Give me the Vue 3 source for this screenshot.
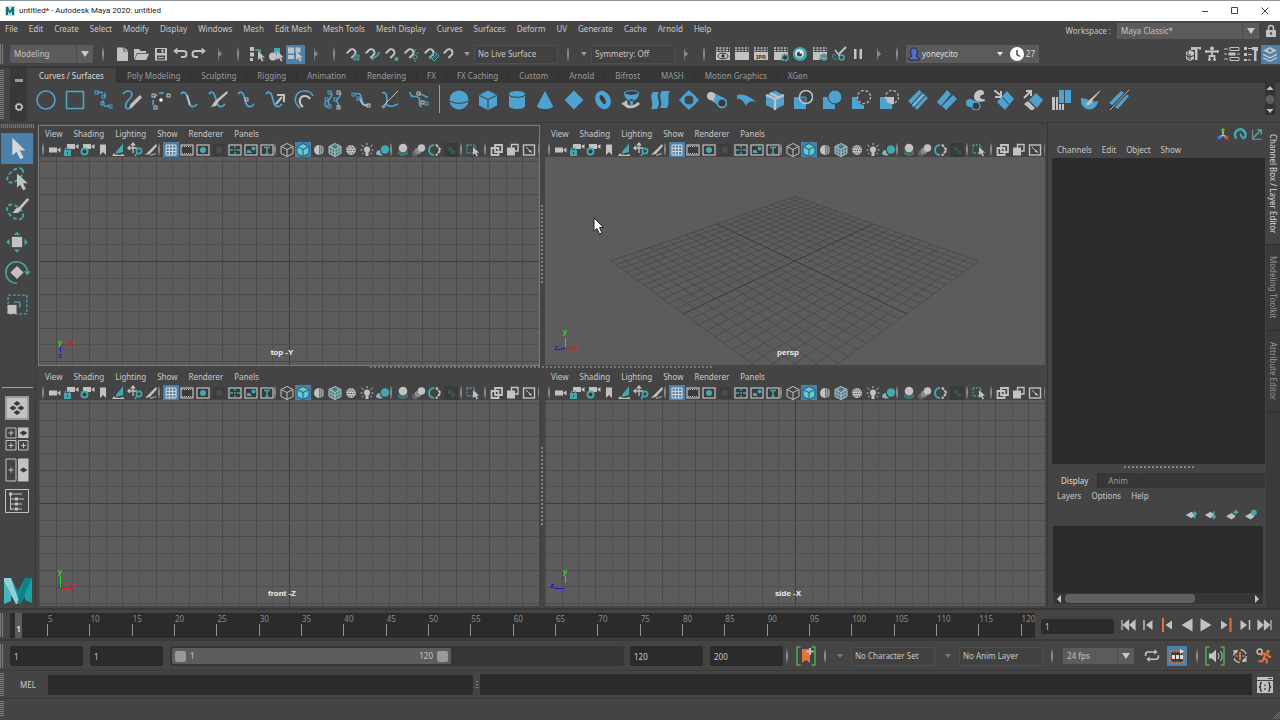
<script setup>
const G = '#c2c2c2'
const T = '#43a8b0'
const B = '#4ea2d0'
const O = '#e0733f'
const D = '#3a3a3a'

const menus = ['File', 'Edit', 'Create', 'Select', 'Modify', 'Display', 'Windows', 'Mesh', 'Edit Mesh', 'Mesh Tools', 'Mesh Display', 'Curves', 'Surfaces', 'Deform', 'UV', 'Generate', 'Cache', 'Arnold', 'Help']
const shelfTabs = ['Curves / Surfaces', 'Poly Modeling', 'Sculpting', 'Rigging', 'Animation', 'Rendering', 'FX', 'FX Caching', 'Custom', 'Arnold', 'Bifrost', 'MASH', 'Motion Graphics', 'XGen']
const panelMenus = ['View', 'Shading', 'Lighting', 'Show', 'Renderer', 'Panels']

const pointer = (x, y, s = 1) => `<path transform="translate(${x} ${y}) scale(${s})" d="M0 0v9l2.200-2 1.600 3.600 1.700-.800-1.600-3.400h3z" fill="${G}"/>`
const box = (x, y, c = G) => `<rect x="${x}" y="${y}" width="3" height="3" fill="none" stroke="${c}"/>`
const wave = (c = B) => `<path d="M1 4c2-3 5-2 6 2l2 7c1 4 5 5 8 1" fill="none" stroke="${c}" stroke-width="1.800"/>`
const clapper = `<path d="M1 6h14v8H1z" fill="${G}"/><path d="M1 4.500h14M1 2h14" stroke="${G}" stroke-width="1.500" stroke-dasharray="2 1.300"/>`
const magnet = `<path transform="rotate(45 7 7)" d="M3.500 11V6.500a3.300 3.300 0 0 1 6.600 0V11" fill="none" stroke="${G}" stroke-width="2"/>`
const camera = (x, y) => `<path d="M${x} ${y}h8v5h-8zM${x + 8.5} ${y + 2}l3-2v5l-3-2z" fill="${G}"/>`
const frame = inner => `<rect x="2" y="3" width="12" height="10" fill="${D}" stroke="${G}" stroke-width="1.200"/>${inner}`

const fileIcons = {
  'New scene': `<path d="M3 1.500h6.500v4H14V15H3z" fill="${G}"/><path d="M10.500 1.500L14 5h-3.500z" fill="${G}"/>`,
  'Open scene': `<path d="M1 3h5l1.500 2H13v2H4l-2 5-1 1z" fill="${G}"/><path d="M4.500 7.800H16L13.200 14H1.500z" fill="${G}"/>`,
  'Save scene': `<path fill-rule="evenodd" d="M2 2h12v12.500H2zM4 3v4h8V3zM4 9.500v4h8v-4z" fill="${G}"/><path d="M8.500 3.500h2v3h-2zM5 11h6v1H5z" fill="${G}"/>`,
  'Undo': `<path d="M5.500 1.500v7L1 5z" fill="${G}"/><path d="M4 5h7.500a3 3 0 0 1 0 6H9" fill="none" stroke="${G}" stroke-width="2"/>`,
  'Redo': `<path d="M10.500 1.500v7L15 5z" fill="${G}"/><path d="M12 5H4.500a3 3 0 0 0 0 6H7" fill="none" stroke="${G}" stroke-width="2"/>`
}
const maskIcons = {
  'Hierarchy mode': `<path d="M1 1h4v4H1zM1 6.500h4v4H1zM1 12h3v3H1z" fill="${G}"/><path d="M6 4h5v4" stroke="${T}" fill="none" stroke-width="1.600"/>${pointer(9, 5)}`,
  'Object mode': `<path d="M6 2h6v6H6z" fill="${T}"/><circle cx="5" cy="10.500" r="4" fill="${G}"/>${pointer(9, 5)}`,
  'Component mode': `<path d="M1 1.500h6v6H1zM8.500 1.500h5v5h-5zM1 9h6v4H1z" fill="${G}"/>${pointer(9, 5)}`
}
const snapIcons = {
  'Snap to grids': magnet + `<path d="M8 10h7M8 13h7M10 8v7M13 8v7" stroke="${T}"/>`,
  'Snap to curves': magnet + `<path d="M8 14c1-5 6-1 7-8" stroke="${T}" fill="none" stroke-width="1.600"/>`,
  'Snap to points': magnet + `<circle cx="12.500" cy="13" r="2" fill="${T}"/>`,
  'Snap to projected center': magnet + `<circle cx="12" cy="11" r="2" fill="none" stroke="${T}"/><path d="M12 3v3M12 14v2M15 6l-1 2" stroke="${T}"/>`,
  'Snap to view planes': magnet + `<path d="M12 6l4 4-5 5-4-4z" fill="none" stroke="${T}"/><path d="M9.500 8.500l4 4M14 8l-5 5" stroke="${T}"/>`,
  'Make live': magnet
}
const renderIcons = {
  'Render view': clapper + `<ellipse cx="8" cy="10" rx="5" ry="2.800" fill="none" stroke="${D}"/><circle cx="8" cy="10" r="1.800" fill="${D}"/>`,
  'Render frame': clapper,
  'IPR render': clapper + `<text x="8" y="12.500" text-anchor="middle" font-size="6" font-weight="bold" fill="${D}">IPR</text>`,
  'Render settings': clapper + `<circle cx="12" cy="11.500" r="3" fill="${D}" stroke="${T}" stroke-width="2" stroke-dasharray="2 .600"/>`,
  'Hypershade': `<circle cx="8" cy="8" r="7" fill="${T}"/><circle cx="7.500" cy="7.500" r="4.300" fill="#e6e6e6"/><circle cx="7.500" cy="8" r="2.600" fill="#30464a"/><circle cx="8.800" cy="6.500" r="1.200" fill="#fff"/>`,
  'Render setup': clapper + `<path d="M12 8l4 2-4 2-4-2zM8 12l4 2 4-2v1.500l-4 2-4-2z" fill="${T}" stroke="${D}" stroke-width=".500"/>`,
  'Light editor': `<path d="M15 1L8 8" stroke="${G}" stroke-width="2"/><circle cx="10.500" cy="11.500" r="2.500" fill="none" stroke="${T}" stroke-width="1.600"/><path d="M4 4l3 4 2 2" stroke="${G}" stroke-width="1.500" fill="none"/><path d="M1 9h4M2 13h4M1 11h2" stroke="${T}" stroke-dasharray="1.500 1"/>`,
  'Pause': `<path d="M4 3h2.500v10H4zM9.500 3H12v10H9.500z" fill="${G}"/>`
}
const sideIcons = {
  'Modeling toolkit': `<path d="M1 6l4-2 4 2v7l-4 2-4-2z" fill="${G}"/><path d="M1 9.500l4 1.500 4-1.500M5 8v6M3 5v8" stroke="${D}" fill="none"/><path d="M6 1h10v2.500h-2V2.800h-1.500V14H10V4H6z" fill="${G}"/>`,
  'Character controls': `<circle cx="8" cy="2.500" r="2" fill="${G}"/><path d="M1 5.500h14M8 5v5M5.500 15v-5h5v5" stroke="${G}" stroke-width="1.800" fill="none"/><path d="M2.500 4v3M13.500 4v3M4 13.500h3M9 13.500h3" stroke="${G}"/>`,
  'Channel box': `<path d="M0 3h4M0 8h3M0 13h4M13 8h3" stroke="${G}"/><path d="M6 1.500h9v3H6zM6 11.500h9v3H6z" fill="none" stroke="${G}"/><path d="M4.500 6.500h7v3h-7z" fill="${G}"/>`,
  'Attribute editor': `<path d="M1 1h3v3H1zM1 7h3v3H1zM1 13h3v2H1z" fill="${G}"/><path d="M5 2.500h4M5 8.500h4M5 14h3" stroke="${G}"/><path d="M9 1h6v4h-1.500v10H11V4H9z" fill="${G}"/>`,
  'Layer editor': `<path d="M8 1l7 3.500L8 8 1 4.500z" fill="${G}"/><path d="M1 7.500L8 11l7-3.500v1.800l-7 3.500-7-3.500zM1 11l7 3.500 7-3.500v1.500L8 16l-7-3.500z" fill="${G}"/><circle cx="8" cy="4.500" r="1.500" fill="#3f6c8c"/>`
}

const curveIcons = {
  'Circle': `<circle cx="10" cy="10" r="9" fill="none" stroke="${B}" stroke-width="1.600"/>`,
  'Square': `<rect x="1.500" y="1.500" width="17" height="17" fill="none" stroke="${B}" stroke-width="1.600"/>`,
  'CV curve': `<path d="M4 2.500h7v5M9 10v6h8" fill="none" stroke="${B}" stroke-width="1.300" stroke-dasharray="5 2"/>${box(1, 1, B)}${box(8, 5, B)}${box(7, 12, B)}${box(15, 15, B)}`,
  'Pencil curve': `<path d="M1 4c3-4 8-4 9 0 1 5-9 7-6 14 3 2 6-1 7-3" fill="none" stroke="${B}" stroke-width="1.700"/><path d="M18 5l2 2.500-9 9-4 2.500 1.500-5z" fill="${G}"/>`,
  'Arc': `<path d="M2 15C1 8 6 2 13 3" fill="none" stroke="${B}" stroke-width="1.700" stroke-dasharray="5 2"/>${box(1, 4, G)}${box(16, 4, G)}${box(3, 16, G)}<circle cx="10" cy="10" r="1.800" fill="#fff"/>`,
  'Attach curves': wave() + `<path d="M7 5l3 10" stroke="${G}" stroke-width="1.800"/>`,
  'Detach curves': wave() + `<path d="M19 1l1 2-9 8-3 5-5 1 4-6z" fill="${G}"/>`,
  'Insert knot': wave() + box(8, 8),
  'Extend curve': wave() + `<path d="M11 14l6-7M12 5h7v7" stroke="${G}" stroke-width="2" fill="none"/>`,
  'Offset curve': `<path d="M6 18C-2 12 1 1 10 1c5 0 8 2 9 5" fill="none" stroke="${B}" stroke-width="1.700"/><path d="M9 17c-5-4-4-11 2-11 3 0 4 1 5 3" fill="none" stroke="${G}" stroke-width="2.200"/>`,
  'Rebuild curve': `<path d="M8 2.500c3 2-1 5-2 7s-1 4 1 6M17 2.500c3 3-4 6-3 9s3 4 1 6M4 11c-3 2-3 5 1 6" fill="none" stroke="${B}" stroke-width="1.500"/>${box(5, 1, B)}${box(14, 1)}${box(2, 8, B)}${box(11, 8, B)}${box(5, 15, B)}${box(14, 16)}`,
  'Curve editing': `<path d="M4 4c6-2 6 2 7 6s3 8 7 4" fill="none" stroke="${B}" stroke-width="1.600"/><path d="M9 8c1 5 3 8 7 7" fill="none" stroke="${G}" stroke-width="1.500"/>${box(1, 3, B)}${box(6, 7, B)}${box(16, 14)}`,
  'Intersect curves': `<path d="M2 3c4-2 5 3 5 7s-2 8-5 8M6 14c4 4 8 2 12 0" fill="none" stroke="${B}" stroke-width="1.700"/><path d="M18 1L2 17" stroke="${G}"/>`,
  'Align curves': `<path d="M1 2c1 8 6 2 9 6 2 3-2 8 3 9" fill="none" stroke="${B}" stroke-width="1.600"/><path d="M10 4c4-1 6 4 9 3" fill="none" stroke="${B}" stroke-width="1.500"/>${box(8, 2)}${box(12, 11)}${box(16, 12, B)}`
}
const square2 = `<path d="M1 7h12v12H1z" fill="${B}"/>`
const surfaceIcons = {
  'Sphere': `<circle cx="10" cy="10" r="9.500" fill="${B}"/><path d="M1 11c4 3 14 3 18 0" fill="none" stroke="${D}"/>`,
  'Cube': `<path d="M10 .500l9 4.500v10.500L10 20l-9-4.500V5z" fill="${B}"/><path d="M1.500 5.500L10 9.500l8.500-4M10 9.500V19" fill="none" stroke="${D}"/>`,
  'Cylinder': `<path d="M2 4c0-4 16-4 16 0v12c0 4-16 4-16 0z" fill="${B}"/><path d="M2 5c2 3 14 3 16 0" fill="none" stroke="${D}"/>`,
  'Cone': `<path d="M10 1l8 15c0 4-16 4-16 0z" fill="${B}"/>`,
  'Plane': `<path d="M10 .500l9.500 9.500-9.500 9.500L.500 10z" fill="${B}"/>`,
  'Torus': `<ellipse cx="10" cy="10" rx="7.500" ry="9.500" fill="${B}" transform="rotate(-25 10 10)"/><ellipse cx="10" cy="9.500" rx="2.200" ry="5" fill="${D}" transform="rotate(-28 10 10)"/>`,
  'Revolve': `<path d="M3 2c0 12 15 12 15 0zM9 9h3v6H9z" fill="${B}"/><ellipse cx="10.500" cy="3" rx="7" ry="2.200" fill="${D}" stroke="${B}"/><path d="M4 14c2 4 9 4 14-1" fill="none" stroke="${G}" stroke-width="2.800"/><path d="M0 14l6-4 1 7z" fill="${G}"/>`,
  'Loft': `<path d="M3 2h6c-4 6 3 9-2 17H1c4-7-3-11 2-17zM12 1h8c-4 6 1 10-3 17h-7c4-7-3-11 2-17z" fill="${B}"/>`,
  'Planar': `<path d="M10 0l4 4H6zM10 20l4-4H6zM0 10l4-4v8zM20 10l-4-4v8z" fill="${B}"/><path d="M7 4.500h6l2.500 2.500v6L13 15.500H7L4.500 13V7z" fill="none" stroke="${B}" stroke-width="2.500"/>`,
  'Extrude': `<circle cx="4" cy="6" r="4" fill="${G}"/><path d="M3 2l6 2-2 8-5-3z" fill="${G}"/><path d="M9 4l8 4-3 9-8-5z" fill="${B}"/><circle cx="15" cy="13" r="4.500" fill="${D}" stroke="${B}" stroke-width="1.800"/>`,
  'Birail': `<path d="M1 5C8 3 14 7 20 12c-5-2-9 1-10 4C8 12 5 8 1 9z" fill="${B}"/>`,
  'Boundary': `<path d="M10 .500l9 5v9.500L10 19.500 1 15V5.500z" fill="${B}"/><path d="M1 5l9 4 9-4M10 9v11M5 3l10 5" fill="none" stroke="${G}" stroke-width="2.400"/>`,
  'Project curve': square2 + `<circle cx="13" cy="7" r="6.500" fill="${D}" fill-opacity=".600" stroke="${G}" stroke-width="1.500"/><path d="M7 7h6v6" fill="none" stroke="${B}"/>`,
  'Intersect surfaces': square2 + `<circle cx="13" cy="7" r="7" fill="${B}" stroke="${D}"/>`,
  'Trim': `<path d="M1 7h5c0 4 3 8 7 8v4H1z" fill="${B}"/><circle cx="13" cy="7" r="6.500" fill="none" stroke="${G}" stroke-width="1.200" stroke-dasharray="2.500 2"/>`,
  'Untrim': `<path d="M1 7h12v12H1z" fill="${B}"/><path d="M7 7h8v7c-4 1-7-2-8-7z" fill="${G}"/><circle cx="13" cy="7" r="6.500" fill="none" stroke="${G}" stroke-width="1.200" stroke-dasharray="2.500 2"/>`,
  'Attach surfaces': `<path d="M11 0l9 8L9 20 0 11z" fill="${B}"/><path d="M14 3L3 15M17 6L6 18" stroke="${D}"/><path d="M15.500 4.500L4.500 16.500" stroke="${G}"/>`,
  'Detach surfaces': `<path d="M10 0l4 4L4 16l-4-4zM16 5l4 4L9 20l-4-4z" fill="${B}"/>`,
  'Fillet': `<path d="M9 7c0-8 10-9 10-4 0 3-4 1-4 4s6 1 5 4c-6 2-11 0-11-4z" fill="${G}"/><path d="M4 10l8 1v8l-6-2z" fill="${B}"/><circle cx="5" cy="13" r="4" fill="${B}"/><circle cx="11" cy="16" r="4" fill="${D}" stroke="${B}" stroke-width="1.500"/>`,
  'Insert isoparm': `<path d="M13 1l7 8-9 11-8-8z" fill="${B}"/><path d="M8 6.500l7 8" stroke="${D}"/><path d="M0 0l6 5M7 1v6H1" stroke="${G}" stroke-width="2" fill="none"/>`,
  'Extend surface': `<path d="M13 3l7 7-6 8-8-8z" fill="${B}"/><path d="M5 11l7 7-3 3-8-7z" fill="${G}"/><path d="M1 8l6-6M3 1h5v5" stroke="${G}" stroke-width="2" fill="none"/>`,
  'Rebuild surface': `<path d="M8 0h5v13H8zM14 0h6v13h-6z" fill="${B}"/><path d="M1 7h3v13H1zM5 7h2v13H5zM8 14h2v6H8zM11 14h2v6h-2z" fill="${G}"/>`,
  'Sculpt surface': `<path d="M1 8c-2 13 15 16 17 3-5 1-9 1-11-2z" fill="${B}"/><path d="M20 1L12 10c1 2-3 6-6 4 3-1 2-4 5-5z" fill="${G}" stroke="${G}"/>`,
  'Surface editing': `<path d="M12 1l8 5-11 13-9-6z" fill="${B}"/><path d="M20 0L1 20" stroke="${D}" stroke-width="3"/><path d="M20 0L1 20" stroke="${G}"/>`
}

const cube = (fill, line) => `<path d="M8 1.500l6 3v7l-6 3-6-3v-7z" fill="${fill}" stroke="${line}"/><path d="M2 4.500l6 3 6-3M8 7.500v7" fill="none" stroke="${line}"/>`
const panelGroups = [
  [
    ['Select camera', camera(2, 5.5)],
    ['Lock camera', camera(4, 2) + `<path d="M1 8h7v6H1z" fill="${T}"/><path d="M2.500 8V6h4v2" stroke="${T}" fill="none"/><path d="M4 10h1v2H4z" fill="${D}"/>`],
    ['Camera attributes', camera(4, 2) + `<circle cx="5.500" cy="9.500" r="3" fill="${D}" stroke="${T}" stroke-width="2"/>`],
    ['Bookmarks', `<path d="M5 2.500h6V13L8 10l-3 3z" fill="${G}"/>`],
    ['Image plane', `<path d="M12 1v9l-7 2c0-5 4-5 7-11z" fill="${T}"/><path d="M1 14l2-3 1 1.500 5 .500 3-1 1.500 2z" fill="${G}"/>`],
    ['2D pan zoom', `<path d="M1 6h9M6 2v9M3 4L1 6l2 2M4 3.500L6 1l2 2.500" stroke="${G}" fill="none" stroke-width="1.300"/><circle cx="12" cy="9" r="2.600" fill="none" stroke="${T}" stroke-width="1.600"/><path d="M10 11l-2 3" stroke="${T}" stroke-width="1.600"/>`],
    ['Grease pencil', `<path d="M13 2L6 9l-4 4 5-1 7-8z" fill="${G}"/><path d="M7 13c3 1 3-2 6-1" stroke="${G}" fill="none"/>`]
  ],
  [
    ['Grid', `<path d="M3 3h10v10H3zM3 6.300h10M3 9.600h10M6.300 3v10M9.600 3v10" fill="none" stroke="#dcdcdc"/>`, true],
    ['Film gate', frame(`<path d="M3 4.500h10M3 11.500h10" stroke="${G}" stroke-dasharray="1 1"/>`)],
    ['Resolution gate', frame(`<circle cx="8" cy="8" r="3" fill="${T}"/>`)],
    ['Gate mask', `<path d="M2 2h12v12H2z" fill="#3c3c3c"/><circle cx="8" cy="8" r="3.500" fill="#4a4a4a"/>`],
    ['Field chart', frame(`<path d="M8 3v3M8 10v3M2 8h4M10 8h4" stroke="${T}" stroke-width="1.300"/><path d="M7 8h2M8 7v2" stroke="${T}"/>`)],
    ['Safe action', frame(`<circle cx="10.500" cy="6.500" r="2" fill="${T}"/><path d="M4 11V8h3l2 3z" fill="${T}"/>`)],
    ['Safe title', frame(`<path d="M5 5.500h6M8 5.500V12M6.500 11.500h3" stroke="${T}" stroke-width="1.500"/>`)]
  ],
  [
    ['Wireframe', cube('none', G)],
    ['Smooth shade', cube('#5fc8d4', '#24596b'), true],
    ['Default material', `<circle cx="8" cy="8" r="5" fill="${G}"/><path d="M8 3v10a5 5 0 0 0 0-10" fill="#777"/><path d="M9 5h4M9 7h4M9 9h4M9 11h3" stroke="${G}" stroke-dasharray="1 1"/>`],
    ['Wireframe on shaded', cube('#3f7f86', G) + `<path d="M5 3v10M11 3v10M2 8l6 3 6-3" fill="none" stroke="${G}" stroke-width=".700"/>`],
    ['Textured', `<circle cx="8" cy="8" r="5" fill="${G}"/><path d="M4 6h9M3 8.500h10M4 11h8M5.500 4h6" stroke="#444" stroke-dasharray="1.200 1.200"/>`],
    ['Use all lights', `<circle cx="8" cy="7.500" r="3" fill="${G}"/><path d="M6.500 10h3v4h-3z" fill="${G}"/><path d="M8 1v2M2.500 3l2 1.500M13.500 3l-2 1.500M1.500 8h2M12.500 8h2M3 12l1.500-1M13 12l-1.500-1" stroke="${G}"/>`],
    ['Shadows', `<circle cx="10" cy="7.500" r="4.200" fill="${T}"/><path d="M1 12c0-3 2-4 4-4 0 3 1 4 3 5-3 1-5 .500-7-1z" fill="#7fb9bd"/>`]
  ],
  [
    ['Ambient occlusion', `<path d="M3 9c0 5 10 5 10 0z" fill="#3f6f73"/><circle cx="8" cy="6" r="4.300" fill="${G}"/><path d="M3 11c2 3 8 3 10 0" stroke="${T}" fill="none" stroke-dasharray="2 1"/>`],
    ['Motion blur', `<circle cx="4" cy="11.500" r="3" fill="#666"/><circle cx="7" cy="9" r="3.300" fill="#8a8a8a"/><circle cx="10.500" cy="6" r="3.700" fill="${G}"/>`],
    ['Anti-aliasing', `<path d="M7 3a5 5 0 0 0 0 10" fill="none" stroke="${T}" stroke-width="2"/><path d="M9 2.500L13.500 8 9 13.500" stroke="${G}" stroke-width="2" stroke-dasharray="3 1" fill="none"/>`],
    ['Depth of field', `<path d="M1 1h14v14H1z" fill="#3a3a3a"/><path d="M5 5h4v4H5zM8 8h4v4H8z" fill="#35545a"/>`]
  ],
  [
    ['Isolate select', `<path d="M2 3h8v8H2z" fill="none" stroke="${T}" stroke-width="1.300" stroke-dasharray="1.500 1.500"/>${pointer(8, 5, 0.9)}`]
  ],
  [
    ['Xray', `<path d="M6 3h7v7H6zM2.500 6h7v7h-7z" fill="none" stroke="${G}" stroke-width="1.800"/>`],
    ['Xray active', `<path d="M6.500 2.500H13V9H6.500z" fill="none" stroke="${G}" stroke-width="1.400"/><path d="M2 5.500h8v8H2z" fill="${G}"/>`],
    ['Xray joints', `<rect x="2.500" y="3" width="11" height="10" fill="none" stroke="${G}" stroke-width="1.400"/><path d="M5 5l5 5" stroke="${G}"/><path d="M11 11L7.500 9.500 10 8z" fill="${G}"/>`]
  ]
]

const axisText = (c, l, x, y) => `<text x="${x}" y="${y}" text-anchor="middle" fill="${c}">${l}</text>`
const GR = '#2bd52b', RD = '#e01818', BL = '#1c1cd0'
const views = [
  { name: 'top -Y', kind: 'ortho', active: true, axis: `<path d="M19 22h12" stroke="${RD}"/><path d="M19.500 23v6" stroke="${BL}"/>${axisText(GR, 'y', 19, 22)}${axisText(RD, 'x', 31, 22)}${axisText(BL, 'z', 19, 35)}` },
  { name: 'persp', kind: 'persp', axis: `<path d="M18.500 25V15" stroke="${GR}"/><path d="M18.500 25l8 2" stroke="${RD}"/><path d="M18.500 25l-8 2" stroke="${BL}"/>${axisText(GR, 'y', 18, 11)}${axisText(RD, 'x', 28, 27)}${axisText(BL, 'z', 9, 27)}` },
  { name: 'front -Z', kind: 'ortho', axis: `<path d="M20 24.500h11" stroke="${RD}"/>${axisText(BL, 'z', 19, 24)}<path d="M19.500 24V12" stroke="${GR}"/>${axisText(GR, 'y', 19, 10)}${axisText(RD, 'x', 32, 24)}` },
  { name: 'side -X', kind: 'ortho', axis: `<path d="M18 24.500H7" stroke="${BL}"/><path d="M18.500 24v-5" stroke="${RD}"/><path d="M18.500 19v-7" stroke="${GR}"/>${axisText(GR, 'y', 18, 10)}${axisText(BL, 'z', 5, 24)}` }
]

const orthoLines = []
for (let i = -40; i <= 40; i++) orthoLines.push({ p: Math.round(i * 16.67), main: i === 0, soft: i % 2 !== 0 })

const project = (u, v) => {
  const s = u + v
  const w = 1 - 0.175 * s
  return [(92 * (u - v)) / w, (43.5 * s) / w]
}
const perspLines = []
for (let i = -12; i <= 12; i++) {
  const t = i / 12
  for (const [a, b] of [[project(t, -1), project(t, 1)], [project(-1, t), project(1, t)]]) {
    perspLines.push({ x1: a[0], y1: a[1], x2: b[0], y2: b[1], main: i === 0 })
  }
}

const playback = {
  'Go to start': `<path d="M1 3v10M7.500 3.500v9L2.500 8zM14 3.500v9L9 8z" stroke="${G}" fill="${G}" stroke-width="1.200"/>`,
  'Step back one frame': `<path d="M4 3v10" stroke="${G}" stroke-width="1.500"/><path d="M12.500 3v10L6 8z" fill="${G}"/>`,
  'Step back one key': `<path d="M4 1v14" stroke="${O}" stroke-width="2"/><path d="M13 3.500v9L6.500 8z" fill="${G}"/>`,
  'Play backwards': `<path d="M13.500 1.500v13L2.500 8z" fill="${G}"/>`,
  'Play forwards': `<path d="M2.500 1.500v13l11-6.500z" fill="${G}"/>`,
  'Step forward one key': `<path d="M12.500 1v14" stroke="${O}" stroke-width="2"/><path d="M3 3.500v9L9.500 8z" fill="${G}"/>`,
  'Step forward one frame': `<path d="M12.500 3v10" stroke="${G}" stroke-width="1.500"/><path d="M3.500 3v10L10 8z" fill="${G}"/>`,
  'Go to end': `<path d="M15 3v10M8.500 3.500v9l5-4.500zM2 3.500v9L7 8z" stroke="${G}" fill="${G}" stroke-width="1.200"/>`
}
const frames = Array.from({ length: 24 }, (_, i) => (i + 1) * 5)

const ellipseDash = `fill="none" stroke="${T}" stroke-width="2" stroke-dasharray="4 2.500"`
const tools = [
  ['Select tool', `<path d="M11 4v19l4.500-4 4 8 3.500-2-4-7.500h6z" fill="#d6d6d6"/>`, true],
  ['Lasso tool', `<ellipse cx="14" cy="11" rx="10" ry="5.500" transform="rotate(-40 14 11)" ${ellipseDash}/><path d="M16 9v15l3.500-3 3 6 3-1.500-3-6h5z" fill="${G}"/>`],
  ['Paint selection tool', `<ellipse cx="14" cy="17" rx="10" ry="6" transform="rotate(40 14 17)" ${ellipseDash}/><path d="M27 2l2 2-9 10c-1 5-6 4-9 4 4-3 3-6 7-6z" fill="${G}"/>`],
  ['Move tool', `<path d="M10.500 10.500h11v11h-11z" fill="${G}"/><path d="M16 5l3.500 3.500h-7zM16 27.500l3.500-3.500h-7zM4.500 16L8 12.500v7zM27.500 16L24 12.500v7z" fill="${T}"/>`],
  ['Rotate tool', `<path d="M16 8.500l7 7-7 7-7-7z" fill="${G}"/><path d="M16 27A11.500 11.500 0 1 1 27 14" fill="none" stroke="${T}" stroke-width="1.700"/><path d="M23.500 14h7L27 18.500z" fill="${T}"/>`],
  ['Scale tool', `<path d="M6.500 6.500h20v20h-20z" fill="none" stroke="${T}" stroke-width="1.500" stroke-dasharray="3 2"/><path d="M6 17h9.500v9.500H6z" fill="${G}"/><path d="M13 14h6v6" fill="none" stroke="${T}" stroke-width="1.500"/>`]
]
const diam = (x, y, c = D) => `<path d="M${x - 4} ${y}l4-2.500 4 2.500-4 2.500z" fill="${c}"/>`
const plus = (x, y) => `<path d="M${x - 2.5} ${y}h5M${x} ${y - 2.5}v5" stroke="${G}"/>`
const layouts = [
  ['Single pane layout', `<path d="M1 1h22v22H1z" fill="${G}" stroke="#9a9a9a" stroke-width="2"/><path d="M12 5l3.500 2.500L12 10 8.500 7.500zM12 14l3.500 2.500L12 19l-3.500-2.500zM4.500 12L8 9.500l3.500 2.500L8 14.500zM12.500 12L16 9.500l3.500 2.500-3.500 2.500z" fill="${D}"/>`],
  ['Four pane layout', `<path d="M1 1h10v10H1zM1 13.500h10v9.500H1zM13.500 13.500h9.500v9.500h-9.500z" fill="none" stroke="${G}"/><path d="M13 .500h10.500V11H13z" fill="${G}"/>${plus(6, 6)}${plus(6, 18.5)}${plus(18.5, 18.5)}${diam(18.5, 6)}`],
  ['Two pane layout', `<path d="M1 1h10v22H1z" fill="none" stroke="${G}"/><path d="M13 .500h10.500v23H13z" fill="${G}"/>${plus(6, 12)}${diam(18.5, 12)}`],
  ['Outliner layout', `<path d="M.500 .500h23v23H.500z" fill="none" stroke="${G}"/><path d="M5.500 5v16M6 5h11M6 10h13M6 15h11M6 20h11" stroke="${G}" fill="none"/><path d="M4 3.500h3v3H4zM10 8.500h3v3h-3zM10 13.500h3v3h-3zM10 18.500h3v3h-3z" fill="${G}"/>`]
]

const channelIcons = {
  'Manipulator': `<path d="M8 8v-4M8 9l-4 3M8 9l4 3" stroke="${G}" stroke-width="2"/><circle cx="8" cy="3.500" r="2" fill="#6fb52c"/><path d="M2 10h4v4H2z" fill="#3f78d8"/><path d="M10 10h4v4h-4z" fill="#d84a4a"/>`,
  'Speed': `<path d="M4 13a6 6 0 1 1 8.500 0" fill="none" stroke="${T}" stroke-width="3"/><path d="M8 9l4 5M8 7l3 5" stroke="${T}" stroke-width="1.500"/>`,
  'Hyperbolic': `<path d="M3 3v11h11" fill="none" stroke="#999"/><path d="M3 13l9-9M8 3.500h5v5" stroke="${T}" stroke-width="1.700" fill="none"/>`
}
const layerBase = `<path d="M1 8.500l7-4 5 4-5 4z" fill="${G}"/>`
const layerIcons = [
  ['Move layer up', layerBase + `<path d="M12 13V6M9.500 8L12 5l2.500 3" stroke="${T}" stroke-width="1.800" fill="none"/>`],
  ['Move layer down', layerBase + `<path d="M12 4v7M9.500 9.500L12 13l2.500-3.500" stroke="${T}" stroke-width="1.800" fill="none"/>`],
  ['Create empty layer', `<path d="M0 10l7-4 5 4-5 4z" fill="${G}"/><path d="M12 2v6M9 5h6" stroke="${T}" stroke-width="2"/>`],
  ['Create layer from selected', `<path d="M0 10l7-4 5 4-5 4z" fill="${G}"/><circle cx="11" cy="5.500" r="3.500" fill="${T}"/>`]
]
const bracket = `<path d="M4.500 1H1v18h3.500M15.500 1H19v18h-3.500" fill="none" stroke="#4cae4c" stroke-width="1.500"/>`
const autoKey = bracket + `<path d="M6 3h8v14l-4-3-4 3z" fill="${O}"/><path d="M14 2v7M10.500 5.500h7" stroke="${G}" stroke-width="2"/>`
const loop = `<path d="M2 10V8q0-3 3-3h9M18 9v2q0 3-3 3H6" fill="none" stroke="${G}" stroke-width="2"/><path d="M13 1.500v7L17 5zM7 10.500v7L3 14z" fill="${G}"/>`
const cached = `<path d="M2.500 4.500h13v11h-13z" fill="${D}" stroke="${O}" stroke-width="2" stroke-dasharray="1.500 1"/><path d="M4 8h3v4H4zM8 8h3v4H8zM12 8h3v4h-3z" fill="#ddd"/><path d="M12 2v5l4-2.500z" fill="#ddd"/>`
const sound = bracket + `<path d="M4 7.500h3l4-4v13l-4-4H4z" fill="${G}"/><path d="M13 7q2 3 0 6M15.500 5q3.500 5 0 10" fill="none" stroke="${G}"/>`
const evalIcon = `<circle cx="10" cy="10" r="8" fill="none" stroke="${G}" stroke-width="1.500" stroke-dasharray="9 3.500"/><path d="M10 5v10" stroke="${O}" stroke-width="2.500"/><path d="M4 10h3.500M12.500 10H16M2 3l5 1-3.500 3.500zM18 17l-5-1 3.500-3.500z" stroke="${G}" fill="${G}"/>`
const runner = `<circle cx="4.500" cy="4.500" r="3.200" fill="none" stroke="${G}" stroke-width="1.800"/><circle cx="15" cy="4.500" r="2.300" fill="${O}"/><path d="M6 9l4-2 4 1 2 3h3M12 8l-2.500 5 4 1.500v5M10 13l-2 3.500H3" fill="none" stroke="${O}" stroke-width="2.500"/>`
</script>

<template>
  <div class="app">
    <header class="titlebar">
      <svg class="title-logo" viewBox="0 0 10 10"><path d="M0 0h10v10H0z" fill="#bfe2e2" /><path d="M1 9V1h2l2 4 2-4h2v8H7V5L5 8 3 5v4z" fill="#12727a" /></svg>
      <h1>untitled* - Autodesk Maya 2020: untitled</h1>
      <div class="window-buttons">
        <button aria-label="Minimize"><svg viewBox="0 0 8 8"><path d="M1 4.500h6" /></svg></button>
        <button aria-label="Maximize"><svg viewBox="0 0 8 8"><path d="M.500 .500h6v6h-6z" /></svg></button>
        <button aria-label="Close"><svg viewBox="0 0 8 8"><path d="M.500 .500l7 7M7.500 .500l-7 7" /></svg></button>
      </div>
    </header>

    <nav class="menubar">
      <button v-for="m in menus" :key="m">{{ m }}</button>
      <div class="workspace">
        <label for="workspace">Workspace :</label>
        <span class="combo workspace-combo"><select id="workspace"><option>Maya Classic*</option></select><svg viewBox="0 0 8 6"><path d="M0 0h8L4 6z" /></svg></span>
        <button class="lock" aria-label="Lock workspace"><svg viewBox="0 0 10 14"><path d="M2.500 7V4a2.500 2.500 0 0 1 5 0v3" fill="none" stroke="#c2c2c2" stroke-width="1.600" /><path d="M0 6h10v7H0z" fill="#c2c2c2" /><circle cx="5" cy="9.500" r="1.200" fill="#444" /></svg></button>
      </div>
    </nav>

    <div class="statusline">
      <i class="grip lines"></i>
      <span class="combo mode-combo"><select aria-label="Menu set"><option>Modeling</option></select><svg viewBox="0 0 8 6"><path d="M0 0h8L4 6z" /></svg></span>
      <i class="sep"></i>
      <div class="icons five"><button v-for="(d, n) in fileIcons" :key="n" :aria-label="n"><svg viewBox="0 0 16 16" v-html="d"></svg></button></div>
      <i class="sep fold"></i><i class="sep"></i>
      <div class="icons three"><button v-for="(d, n) in maskIcons" :key="n" :aria-label="n" :class="{ on: n === 'Component mode' }"><svg viewBox="0 0 16 16" v-html="d"></svg></button></div>
      <i class="sep fold"></i><i class="sep"></i>
      <div class="icons six"><button v-for="(d, n) in snapIcons" :key="n" :aria-label="n"><svg viewBox="0 0 16 16" v-html="d"></svg></button></div>
      <i class="drop"></i>
      <button class="field">No Live Surface</button>
      <i class="sep"></i><i class="drop"></i>
      <button class="field">Symmetry: Off</button>
      <i class="sep fold"></i><i class="sep"></i>
      <div class="icons eight"><button v-for="(d, n) in renderIcons" :key="n" :aria-label="n"><svg viewBox="0 0 16 16" v-html="d"></svg></button></div>
      <i class="sep fold"></i><i class="sep"></i>
      <button class="account">
        <svg class="avatar" viewBox="0 0 12 14"><path d="M1 13v-2l3-2c-2-3-2-8 2-8s4 5 2 8l3 2v2z" fill="#5570c8" stroke="#1a2350" /></svg>
        <span>yoneycito</span>
        <i class="drop light"></i>
        <svg class="clock" viewBox="0 0 14 14"><circle cx="7" cy="7" r="7" fill="#fff" /><path d="M7 3v4.500l3 2" fill="none" stroke="#444" stroke-width="1.500" /></svg>
        <span>27</span>
      </button>
      <div class="icons five end"><button v-for="(d, n) in sideIcons" :key="n" :aria-label="n" :class="{ on: n === 'Layer editor' }"><svg viewBox="0 0 16 16" v-html="d"></svg></button></div>
    </div>

    <section class="shelf">
      <i class="grip"></i>
      <div class="shelf-gutter">
        <button aria-label="Shelf tabs"><svg viewBox="0 0 10 10"><path d="M1 4h8v3H1z" fill="#999" /></svg></button>
        <button aria-label="Shelf options"><svg viewBox="0 0 10 10"><circle cx="5" cy="5" r="2.800" fill="none" stroke="#c2c2c2" stroke-width="1.500" /><circle cx="5" cy="5" r="3.800" fill="none" stroke="#c2c2c2" stroke-dasharray="1.500 1.500" /></svg></button>
      </div>
      <div class="shelf-main">
        <div class="tabs"><button v-for="(t, i) in shelfTabs" :key="t" :class="{ current: i === 0 }">{{ t }}</button></div>
        <div class="shelf-body">
          <div class="icons curves"><button v-for="(d, n) in curveIcons" :key="n" :aria-label="n"><svg viewBox="0 0 20 20" v-html="d"></svg></button></div>
          <i class="shelf-rule"></i>
          <div class="icons surfaces"><button v-for="(d, n) in surfaceIcons" :key="n" :aria-label="n"><svg viewBox="0 0 20 20" v-html="d"></svg></button></div>
          <svg class="shelf-scroll" viewBox="0 0 10 32"><path d="M0 0h10v32H0z" fill="#333" /><path d="M1.500 7h7L5 3zM1.500 26h7L5 30z" fill="#c2c2c2" /><circle cx="5" cy="16.500" r="4.500" fill="#5d5d5d" /></svg>
        </div>
      </div>
    </section>

    <main class="workarea">
      <aside class="toolbox">
        <i class="grip flat"></i>
        <button v-for="t in tools" :key="t[0]" class="tool" :class="{ on: t[2] }" :aria-label="t[0]"><svg viewBox="0 0 32 32" v-html="t[1]"></svg></button>
        <hr>
        <button v-for="l in layouts" :key="l[0]" class="layout" :aria-label="l[0]"><svg viewBox="0 0 24 24" v-html="l[1]"></svg></button>
        <svg class="maya" viewBox="0 0 28 26">
          <path d="M0 0h7l7 13 7-13h7l-6 17-6 9h-4L7 16z" fill="#128b92" />
          <path d="M0 0h7l9 26h-4L0 4z" fill="#8fd0d4" /><path d="M0 4l7 12v7l-7 3z" fill="#45b5bb" /><path d="M21 0h7v25l-7-3z" fill="#18a0a6" /><path d="M21 0l7 0-12 26h-3z" fill="#0d8188" />
        </svg>
      </aside>

      <div class="panels">
        <section v-for="v in views" :key="v.name" class="panel" :class="{ active: v.active }">
          <nav class="panel-menu"><button v-for="m in panelMenus" :key="m">{{ m }}</button></nav>
          <div class="panel-tools">
            <template v-for="(grp, gi) in panelGroups" :key="gi">
              <i class="sep"></i>
              <div class="icons" :class="'n' + grp.length"><button v-for="b in grp" :key="b[0]" :class="{ on: b[2] }" :aria-label="b[0]"><svg viewBox="0 0 16 16" v-html="b[1]"></svg></button></div>
            </template>
            <i class="sep"></i>
          </div>
          <div class="canvas">
            <svg class="grid" aria-hidden="true">
              <svg x="50%" y="50%" overflow="visible">
                <template v-if="v.kind === 'ortho'">
                  <g v-for="l in orthoLines" :key="l.p" class="ortho" :class="{ main: l.main, soft: l.soft }">
                    <line :x1="l.p" :x2="l.p" y1="-900" y2="900" /><line :y1="l.p" :y2="l.p" x1="-900" x2="900" />
                  </g>
                </template>
                <template v-else>
                  <line v-for="(l, i) in perspLines" :key="i" :x1="l.x1" :y1="l.y1" :x2="l.x2" :y2="l.y2" class="pline" :class="{ main: l.main }" />
                </template>
              </svg>
            </svg>
            <svg class="axis" viewBox="0 0 40 40" v-html="v.axis"></svg>
            <svg v-if="v.kind === 'persp'" class="cursor" viewBox="0 0 12 18"><path d="M1 1v13l3-2.500 2.500 5.500 2.500-1-2.500-5.500h4z" fill="#fff" stroke="#222" /></svg>
            <span class="view-name">{{ v.name }}</span>
          </div>
        </section>
        <i class="dots vert upper"></i><i class="dots vert lower"></i><i class="dots horiz"></i>
      </div>

      <aside class="channelbox">
        <div class="channel-icons"><button v-for="(d, n) in channelIcons" :key="n" :aria-label="n"><svg viewBox="0 0 16 16" v-html="d"></svg></button></div>
        <nav class="panel-menu"><button>Channels</button><button>Edit</button><button>Object</button><button>Show</button></nav>
        <div class="channel-list"></div>
        <i class="split"></i>
        <div class="layers">
          <div class="tabs"><button class="current">Display</button><button>Anim</button></div>
          <nav class="panel-menu"><button>Layers</button><button>Options</button><button>Help</button></nav>
          <div class="layer-icons"><button v-for="l in layerIcons" :key="l[0]" :aria-label="l[0]"><svg viewBox="0 0 16 16" v-html="l[1]"></svg></button></div>
          <div class="layer-list"></div>
          <div class="hscroll">
            <button aria-label="Scroll left"><svg viewBox="0 0 8 8"><path d="M6 0v8L2 4z" /></svg></button>
            <i class="track"><i class="thumb"></i></i>
            <button aria-label="Scroll right"><svg viewBox="0 0 8 8"><path d="M2 0v8l4-4z" /></svg></button>
          </div>
        </div>
      </aside>

      <nav class="sidetabs">
        <button class="current">Channel Box / Layer Editor</button><button>Modeling Toolkit</button><button>Attribute Editor</button>
      </nav>
    </main>

    <div class="timeline">
      <i class="grip lines"></i>
      <div class="ruler">
        <i class="lead"></i>
        <span v-for="f in frames" :key="f" :class="{ last: f === 120 }">{{ f }}</span>
        <b class="now">1</b>
      </div>
      <input class="current-time" aria-label="Current time" value="1">
      <div class="icons eight"><button v-for="(d, n) in playback" :key="n" :aria-label="n"><svg viewBox="0 0 16 16" v-html="d"></svg></button></div>
    </div>

    <div class="range">
      <i class="grip lines"></i>
      <input aria-label="Animation start" value="1">
      <input aria-label="Playback start" value="1">
      <div class="range-track"><div class="range-bar"><i></i><span>1</span><span class="to">120</span><i></i></div></div>
      <input aria-label="Playback end" value="120">
      <input aria-label="Animation end" value="200">
      <i class="sep slim"></i>
      <button class="big" aria-label="Auto keyframe"><svg viewBox="0 0 20 20" v-html="autoKey"></svg></button>
      <i class="sep"></i>
      <i class="drop dim"></i><button class="field">No Character Set</button>
      <i class="drop dim wide"></i><button class="field">No Anim Layer</button>
      <i class="sep"></i>
      <span class="combo fps-combo"><select aria-label="Frame rate"><option>24 fps</option></select><svg viewBox="0 0 8 6"><path d="M0 0h8L4 6z" /></svg></span>
      <button class="med push" aria-label="Loop"><svg viewBox="0 0 20 20" v-html="loop"></svg></button>
      <button class="big on cache" aria-label="Cached playback"><svg viewBox="0 0 18 18" v-html="cached"></svg></button>
      <i class="sep"></i>
      <button class="big" aria-label="Mute"><svg viewBox="0 0 20 20" v-html="sound"></svg></button>
      <button class="med gapped" aria-label="Evaluation mode"><svg viewBox="0 0 20 20" v-html="evalIcon"></svg></button>
      <button class="med gapped" aria-label="Preferences"><svg viewBox="0 0 20 20" v-html="runner"></svg></button>
    </div>

    <div class="command">
      <i class="grip"></i>
      <label for="mel">MEL</label>
      <input id="mel" class="mel">
      <i class="cmd-dots"></i>
      <output class="result"></output>
      <button aria-label="Script editor"><svg viewBox="0 0 16 16"><path d="M0 0h16v16H0z" fill="#c2c2c2" /><path d="M0 3.500h16M11 1.500h4" stroke="#444" /><path d="M5 5.500q-2 0-1.500 2T2 10q2 .500 1.500 2.500T5 14M11 5.500q2 0 1.500 2T14 10q-2 .500-1.500 2.500T11 14M8 7.500V9M8 11v2" fill="none" stroke="#333" stroke-width="1.300" /></svg></button>
    </div>

    <footer class="helpline"><i class="grip"></i><svg class="resize" viewBox="0 0 10 10"><path d="M10 1L1 10M10 4l-6 6M10 7l-3 3" stroke="#888" /></svg></footer>
  </div>
</template>

<style>
body { margin: 0; background: #444; }
</style>

<style scoped>
.app { min-height: 100vh; display: flex; flex-direction: column; background: #444; color: #c8c8c8; font: 8px/12px "Noto Sans", "Open Sans", sans-serif; overflow: hidden; }
.app * { box-sizing: border-box; }
button { border: 0; padding: 0; margin: 0; background: none; color: inherit; font: inherit; white-space: nowrap; }
svg { display: block; }
input { border: 0; margin: 0; background: #2b2b2b; color: #c8c8c8; font: inherit; border-radius: 2px; padding: 0 4px; height: 20px; width: 73px; flex: none; }
i { flex: none; display: block; }

.titlebar { height: 21px; flex: none; background: #fff; border-top: 1px solid #8b969c; display: flex; align-items: center; padding-left: 5px; color: #222; }
.title-logo { width: 10px; height: 10px; margin-right: 4px; }
h1 { font: 8px/12px Roboto, "Liberation Sans", sans-serif; margin: 0; }
.window-buttons { margin-left: auto; display: flex; }
.window-buttons button { width: 30px; height: 18px; display: grid; place-items: center; }
.window-buttons svg { width: 8px; height: 8px; fill: none; stroke: #444; }

.menubar { height: 21px; flex: none; display: flex; align-items: center; gap: 11px; padding: 0 4px 5px 5px; }
.workspace { margin-left: auto; display: flex; align-items: center; gap: 6px; padding-top: 4px; }
.lock svg { width: 10px; height: 14px; }
.workspace .lock { margin-left: 1px; }

.combo { display: block; position: relative; flex: none; background: #5b5b5b; }
.combo select { appearance: none; width: 100%; height: 100%; border: 0; background: none; color: #c4c4c4; font: inherit; padding: 0 18px 0 4px; }
.combo svg { position: absolute; right: 4px; top: calc(50% - 3px); width: 8px; height: 6px; fill: #c8c8c8; pointer-events: none; }
.combo::after { content: ""; position: absolute; right: 16px; top: 0; bottom: 0; border-left: 1px solid #4c4c4c; }
.workspace-combo { width: 142px; height: 16px; }
.mode-combo { width: 83px; height: 18px; }
.fps-combo { width: 71px; height: 16px; margin-left: 3px; }

.grip { width: 10px; align-self: stretch; position: relative; }
.grip::before { content: ""; position: absolute; left: 0; top: 2px; bottom: 2px; width: 4px; background: repeating-linear-gradient(#7c7c7c 0 1px, #484848 1px 2px); }
.grip.lines::before { background: repeating-linear-gradient(90deg, #777 0 1px, #4a4a4a 1px 2px); }
.grip.flat { width: 34px; height: 5px; align-self: auto; }
.grip.flat::before { width: 34px; top: 1px; bottom: 0; background: repeating-linear-gradient(90deg, #777 0 1px, #484848 1px 2px); }

.statusline { height: 24px; flex: none; display: flex; align-items: center; }
.icons { display: flex; flex: none; }
.icons button { flex: 1 1 0; height: 19px; display: grid; place-items: center; }
.icons svg { width: 16px; height: 16px; }
.on { background: #4a80aa; }
.three { width: 58px; }
.five { width: 97px; }
.six { width: 117px; }
.eight { width: 155px; }
.end { margin-left: auto; }
.sep { width: 19px; height: 16px; position: relative; }
.sep::before { content: ""; position: absolute; left: 50%; top: 1px; bottom: 1px; width: 2px; margin-left: -1px; border-radius: 2px; background: linear-gradient(#555, #8a8a8a 40%, #8a8a8a 60%, #555); }
.sep.fold::before { width: 1px; }
.sep.fold::after { content: ""; position: absolute; left: 50%; top: 5px; border: 3px solid transparent; border-left-color: #8c8c8c; border-right: 0; }
.drop { width: 14px; height: 16px; position: relative; }
.drop::before { content: ""; position: absolute; left: 4px; top: 6px; border: 3px solid transparent; border-top: 4px solid #999; border-bottom: 0; }
.drop.light::before { border-top-color: #e6e6e6; }
.drop.dim::before { border-top-color: #777; }
.field { width: 84px; height: 19px; flex: none; border: 1px solid #4e4e4e; background: #414141; text-align: left; padding-left: 3px; border-radius: 2px; }
.account { width: 133px; height: 18px; flex: none; background: #5b5b5b; display: flex; align-items: center; color: #ddd; padding-left: 2px; }
.avatar { width: 12px; height: 14px; margin-right: 2px; }
.account .drop { margin-left: auto; margin-right: 3px; }
.clock { width: 14px; height: 14px; margin-right: 2px; }
.account span:last-child { margin-right: 4px; }

.shelf { height: 57px; flex: none; display: flex; border-top: 2px solid #373737; border-bottom: 1px solid #393939; padding-bottom: 1px; }
.shelf-gutter { width: 17px; margin-right: 3px; background: #383838; display: flex; flex-direction: column; align-items: center; justify-content: space-between; padding: 7px 0 9px; }
.shelf-gutter svg { width: 10px; height: 10px; }
.shelf-main { flex: 1; display: flex; flex-direction: column; }
.tabs { display: flex; height: 15px; flex: none; background: #363636; color: #9a9a9a; }
.tabs button { padding: 1px 10px 0; border-right: 1px solid #303030; height: 15px; }
.tabs .current { background: #444; color: #dcdcdc; padding: 1px 9px 0; }
.shelf .tabs .current { padding-right: 12px; }
.shelf-body { flex: 1; display: flex; align-items: center; padding: 0 5px 8px 2px; }
.shelf-body .icons svg { width: 20px; height: 20px; }
.curves { width: 401px; }
.surfaces { width: 688px; }
.shelf-rule { width: 1px; height: 28px; background: #999; margin: 0 5px 0 6px; }
.shelf-scroll { width: 10px; height: 32px; margin-left: auto; }

.workarea { flex: 1; display: flex; min-height: 480px; }
.toolbox { width: 36px; flex: none; display: flex; flex-direction: column; border-right: 1px solid #393939; padding-left: 1px; }
.tool { width: 32px; height: 31px; flex: none; display: grid; place-items: center; }
.tool svg { width: 30px; height: 30px; }
.tool.on { margin-top: 5px; }
.toolbox hr { width: 31px; border: 0; height: 1px; background: #a0a0a0; margin: auto 0 8px 1px; }
.layout { width: 32px; height: 24px; margin-bottom: 7px; display: grid; place-items: center; }
.layout svg { width: 24px; height: 24px; }
.maya { width: 28px; height: 26px; margin: 58px 0 4px 3px; }

.panels { flex: 1; display: grid; grid-template: 241fr 239fr / 1fr 1fr; gap: 2px 4px; padding: 2px 1px 1px 2px; position: relative; min-width: 0; }
.panel { display: flex; flex-direction: column; border: 1px solid transparent; min-width: 0; min-height: 0; overflow: hidden; }
.panel.active { border-color: #7c7c7c; }
.panel-menu { height: 16px; flex: none; display: flex; gap: 11px; padding-left: 6px; }
.panel-tools { height: 15px; flex: none; display: flex; align-items: center; overflow: hidden; }
.panel-tools .sep { width: 8px; height: 15px; }
.panel-tools .icons button { height: 15px; }
.n7 { width: 108px; }
.n4 { width: 62px; }
.n1 { width: 16px; }
.n3 { width: 46px; }
.canvas { flex: 1; background: #5c5c5c; position: relative; overflow: hidden; }
.grid { position: absolute; inset: 0; width: 100%; height: 100%; }
.ortho line { stroke: #4a4a4a; stroke-width: 1; shape-rendering: crispEdges; }
.ortho.soft line { stroke: #505050; }
.ortho.main line { stroke: #3c3c3c; }
.pline { stroke: #484848; stroke-width: .8; }
.pline.main { stroke: #3a3a3a; stroke-width: 1; }
.axis { position: absolute; left: 2px; bottom: 2px; width: 40px; height: 40px; font: bold 8px "Liberation Sans", sans-serif; }
.cursor { position: absolute; left: 10%; top: 29%; width: 12px; height: 18px; margin-left: -2px; }
.view-name { position: absolute; left: 0; right: 14px; bottom: 6px; text-align: center; color: #f0f0f0; font: bold 8px/12px "Liberation Sans", sans-serif; }
.dots { position: absolute; }
.dots.vert { left: calc(50% - 1px); width: 2px; height: 78px; background: repeating-linear-gradient(#858585 0 2px, transparent 2px 4px); }
.dots.upper { top: 82px; }
.dots.lower { bottom: 83px; }
.dots.horiz { top: 243px; left: 33%; right: 33%; height: 2px; background: repeating-linear-gradient(90deg, #777 0 2px, transparent 2px 4px); }

.channelbox { width: 219px; flex: none; display: flex; flex-direction: column; border-left: 1px solid #363636; padding: 0 1px 1px 4px; }
.channel-icons { height: 19px; display: flex; justify-content: flex-end; padding: 2px 1px 0; gap: 3px; flex: none; }
.channel-icons svg { width: 14px; height: 14px; }
.channelbox .panel-menu { padding-left: 5px; }
.channelbox > .panel-menu { gap: 10px; }
.channel-list { flex: 1; background: #2b2b2b; }
.split { width: 70px; height: 2px; margin: 2px auto 5px; background: repeating-linear-gradient(90deg, #858585 0 2px, transparent 2px 4px); }
.layers { flex: none; display: flex; flex-direction: column; border-bottom: 1px solid #393939; padding-bottom: 2px; }
.layers .panel-menu { padding-top: 1px; height: 15px; gap: 10px; }
.layer-icons { height: 23px; display: flex; justify-content: flex-end; align-items: center; gap: 6px; padding: 0 7px 1px 0; }
.layer-icons button:nth-child(3) { margin-left: 3px; }
.layer-icons svg { width: 13px; height: 13px; }
.layer-list { height: 67px; background: #2b2b2b; margin: 0 2px 0 1px; }
.hscroll { height: 11px; background: #363636; display: flex; align-items: center; margin: 0 2px 0 1px; }
.hscroll button { width: 12px; display: grid; place-items: center; }
.hscroll svg { width: 8px; height: 8px; fill: #c8c8c8; }
.track { flex: 1; height: 9px; }
.thumb { width: 70%; height: 9px; background: #606060; border-radius: 4px; }

.sidetabs { width: 14px; flex: none; background: #3a3a3a; display: flex; flex-direction: column; color: #969696; }
.sidetabs button { writing-mode: vertical-rl; width: 14px; padding: 11px 0; border-bottom: 1px solid #303030; text-align: left; line-height: 14px; }
.sidetabs .current { background: #444; color: #ddd; }

.timeline { height: 33px; flex: none; display: flex; align-items: center; border-top: 2px solid #373737; border-bottom: 2px solid #393939; padding-top: 1px; }
.ruler { flex: 1; height: 25px; background: #2b2b2b; display: flex; padding-left: 4px; position: relative; overflow: hidden; color: #8a8a8a; }
.ruler .lead { flex: 4 1 0; }
.ruler span { flex: 5 1 0; min-width: 0; line-height: 11px; padding-left: 1px; background: linear-gradient(#909090, #909090) 0 11px / 1px 12px no-repeat; }
.ruler .last { flex: 1.6 1 0; overflow: hidden; }
.now { position: absolute; left: 5px; top: 0; bottom: 0; width: 7px; background: #5a5a5a; color: #ddd; text-align: center; padding-top: 10px; }
.current-time { height: 15px; margin: 2px 5px 0 6px; }
.timeline .eight { margin-right: 6px; }

.range { height: 30px; flex: none; display: flex; align-items: center; border-bottom: 1px solid #393939; padding-top: 1px; }
.range input { margin-right: 7px; }
.range-track { flex: 1; height: 20px; background: #363636; padding: 2px; margin-right: 6px; border-radius: 2px; }
.range-bar { width: 62%; height: 16px; background: #5d5d5d; border-radius: 2px; display: flex; align-items: center; padding: 0 3px; gap: 4px; }
.range-bar i { width: 11px; height: 11px; background: #999; border-radius: 2px; }
.range-bar .to { margin-left: auto; }
.big { width: 20px; height: 20px; margin: 0 5px; flex: none; }
.big svg { width: 20px; height: 20px; }
.range .sep { width: 17px; flex: none; }
.range .sep.slim { width: 8px; margin-left: -7px; }
.range .sep.slim + .big { margin: 0 0 0 5px; }
.range .drop { width: 18px; }
.range .drop.wide { width: 24px; }
.range .drop.wide::before { left: 10px; }
.med { width: 18px; height: 18px; flex: none; }
.med svg { width: 16px; height: 16px; margin: 1px; }
.push { margin-left: 9px; }
.cache { margin: 0 1px 0 6px; }
.cache svg { width: 18px; height: 18px; margin: 1px; }
.cache ~ .big { margin: 0; }
.gapped { margin-left: 6px; }
.gapped:last-child { margin-right: 7px; }

.command { height: 28px; flex: none; display: flex; align-items: center; border-bottom: 1px solid #393939; }
.command label { width: 38px; padding-left: 10px; }
.command .mel { flex: 425 1 0; min-width: 0; padding: 0; }
.cmd-dots { width: 7px; height: 8px; background: repeating-linear-gradient(#858585 0 1px, transparent 1px 3px) 3px 0 / 2px 8px no-repeat; }
.result { flex: 772 1 0; height: 21px; background: #2b2b2b; }
.command button { margin: 0 7px 0 5px; }
.command button svg { width: 16px; height: 16px; }
.helpline { height: 21px; flex: none; display: flex; justify-content: space-between; align-items: flex-end; border-bottom: 1px solid #3f4757; }
.resize { width: 8px; height: 8px; }
</style>
